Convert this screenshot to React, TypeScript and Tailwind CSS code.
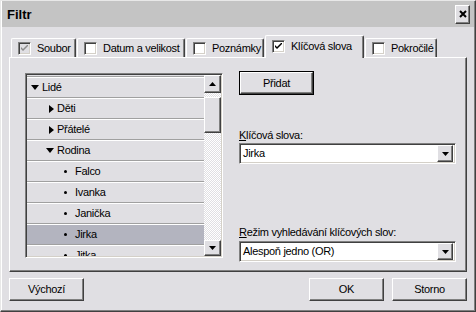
import React from "react";

const raised =
  "border border-t-white border-l-white border-r-[#404040] border-b-[#404040] shadow-[inset_-1px_-1px_#808080]";
const sunken =
  "border border-t-[#808080] border-l-[#808080] border-r-white border-b-white shadow-[inset_1px_1px_#404040,inset_-1px_-1px_#d4d0c8]";

function Check({ checked, disabled }: { checked?: boolean; disabled?: boolean }) {
  return (
    <span
      className={`inline-flex w-[13px] h-[13px] shrink-0 items-center justify-center ${sunken} ${
        disabled ? "bg-[#e0dfe3]" : "bg-white"
      }`}
    >
      {checked && (
        <svg width="7" height="7" viewBox="0 0 7 7">
          <path d="M0 2 L0 4 L2 6 L7 1 L7 -1 L2 4 Z" fill={disabled ? "#8c8c8c" : "#000"} />
        </svg>
      )}
    </span>
  );
}

function Tab({
  label,
  w,
  checked,
  disabled,
  selected,
}: {
  label: string;
  w: string;
  checked?: boolean;
  disabled?: boolean;
  selected?: boolean;
}) {
  return (
    <div
      className={`${w} ${
        selected ? "h-[23px] -mb-[1px] z-10 pb-[2px]" : "h-[19px]"
      } flex items-center gap-[6px] pl-[6px] whitespace-nowrap bg-[#e0dfe3] border-t border-l border-r border-t-white border-l-white border-r-[#404040] shadow-[inset_-1px_0_#808080] rounded-t-[2px]`}
    >
      <Check checked={checked} disabled={disabled} />
      <span className="leading-none">{label}</span>
    </div>
  );
}

function DownArrow() {
  return (
    <svg width="7" height="4" viewBox="0 0 7 4">
      <path d="M0 0 H7 L3.5 4 Z" fill="#000" />
    </svg>
  );
}

function Combo({ value }: { value: string }) {
  return (
    <div className={`h-[21px] w-[217px] bg-white flex items-center ${sunken} p-[2px]`}>
      <span className="flex-1 pl-[1px] leading-none">{value}</span>
      <div className={`w-[16px] h-[17px] bg-[#e0dfe3] flex items-center justify-center ${raised}`}>
        <DownArrow />
      </div>
    </div>
  );
}

type Row = { label: string; level: number; kind: "open" | "closed" | "leaf"; selected?: boolean };

const rows: Row[] = [
  { label: "Lidé", level: 0, kind: "open" },
  { label: "Děti", level: 1, kind: "closed" },
  { label: "Přátelé", level: 1, kind: "closed" },
  { label: "Rodina", level: 1, kind: "open" },
  { label: "Falco", level: 2, kind: "leaf" },
  { label: "Ivanka", level: 2, kind: "leaf" },
  { label: "Janička", level: 2, kind: "leaf" },
  { label: "Jirka", level: 2, kind: "leaf", selected: true },
  { label: "Jitka", level: 2, kind: "leaf" },
];

function TreeRow({ r }: { r: Row }) {
  const pad =
    r.level === 0 ? "pl-[4px]" : r.level === 1 ? (r.kind === "open" ? "pl-[19px]" : "pl-[22px]") : "pl-[37px]";
  return (
    <div
      className={`h-[21px] shrink-0 flex items-center gap-[2px] border-t border-t-white border-b border-b-[#a0a0a0] ${pad} ${
        r.selected ? "bg-[#b3b4bf]" : "bg-[#e0dfe3]"
      }`}
    >
      {r.kind === "open" && (
        <svg width="8" height="5" viewBox="0 0 8 5" className="mr-[1px]">
          <path d="M0 0 H8 L4 5 Z" fill="#000" />
        </svg>
      )}
      {r.kind === "closed" && (
        <svg width="5" height="8" viewBox="0 0 5 8" className="mr-[1px]">
          <path d="M0 0 V8 L5 4 Z" fill="#000" />
        </svg>
      )}
      {r.kind === "leaf" && <span className="w-[3px] h-[3px] bg-black rounded-full mr-[6px]" />}
      <span className="leading-none">{r.label}</span>
    </div>
  );
}

function Btn({ label, def }: { label: string; def?: boolean }) {
  return (
    <div className={def ? "border border-black w-[75px] h-[24px]" : "w-[75px] h-[23px]"}>
      <div className={`w-full h-full bg-[#e0dfe3] flex items-center justify-center ${raised}`}>
        <span className="leading-none">{label}</span>
      </div>
    </div>
  );
}

export default function App() {
  return (
    <div
      className="w-[476px] h-[312px] bg-[#e0dfe3] text-[11px] tracking-[-0.3px] text-black flex flex-col border border-t-[#e8e8e8] border-l-[#e8e8e8] border-r-[#404040] border-b-[#404040] shadow-[inset_-1px_-1px_#808080,inset_1px_1px_#ffffff] overflow-hidden"
      style={{ fontFamily: '"Liberation Sans", Arial, sans-serif' }}
    >
      <div className="h-[26px] mx-[1px] bg-[#c4c4c4] flex items-center justify-between pl-[5px] pr-[4px]">
        <span className="font-bold text-[13px] tracking-normal leading-none">Filtr</span>
        <div className={`w-[15px] h-[19px] bg-[#e0dfe3] flex items-center justify-center ${raised}`}>
          <svg width="8" height="8" viewBox="0 0 8 8">
            <path d="M1 1 L7 7 M7 1 L1 7" stroke="#000" strokeWidth="2" />
          </svg>
        </div>
      </div>

      <div className="flex items-end gap-[1px] pl-[10px] mt-[8px] h-[22px]">
        <Tab label="Soubor" w="w-[65px]" checked disabled />
        <Tab label="Datum a velikost" w="w-[108px]" />
        <Tab label="Poznámky" w="w-[78px]" />
        <Tab label="Klíčová slova" w="w-[99px]" checked selected />
        <Tab label="Pokročilé" w="w-[72px]" />
      </div>

      <div className={`ml-[8px] w-[458px] h-[215px] flex pt-[13px] pl-[15px] ${raised}`}>
        <div className={`mt-[2px] w-[198px] h-[185px] flex ${sunken} p-[1px]`}>
          <div className="flex-1 flex flex-col overflow-hidden">
            <div className="h-[2px] shrink-0 border-b border-b-[#a0a0a0]" />
            {rows.map((r) => (
              <TreeRow key={r.label} r={r} />
            ))}
          </div>
          <div className="w-[17px] flex flex-col bg-[repeating-conic-gradient(#ffffff_0%_25%,#e0dfe3_0%_50%)] bg-[length:2px_2px]">
            <div className={`h-[18px] bg-[#e0dfe3] flex items-center justify-center ${raised}`}>
              <svg width="7" height="4" viewBox="0 0 7 4">
                <path d="M0 4 H7 L3.5 0 Z" fill="#000" />
              </svg>
            </div>
            <div className={`mt-[4px] h-[36px] bg-[#e0dfe3] ${raised}`} />
            <div className="flex-1" />
            <div className={`h-[16px] bg-[#e0dfe3] flex items-center justify-center ${raised}`}>
              <DownArrow />
            </div>
          </div>
        </div>

        <div className="ml-[16px] flex flex-col">
          <Btn label="Přidat" def />
          <div className="mt-[33px] h-[15px] leading-[14px]">
            <span className="underline">K</span>líčová slova:
          </div>
          <Combo value="Jirka" />
          <div className="mt-[61px] h-[16px] leading-[14px]">
            <span className="underline">R</span>ežim vyhledávání klíčových slov:
          </div>
          <Combo value="Alespoň jedno (OR)" />
        </div>
      </div>

      <div className="flex mt-[6px] pl-[8px] pr-[8px]">
        <Btn label="Výchozí" />
        <div className="flex-1" />
        <Btn label="OK" />
        <div className="w-[8px]" />
        <Btn label="Storno" />
      </div>
    </div>
  );
}
